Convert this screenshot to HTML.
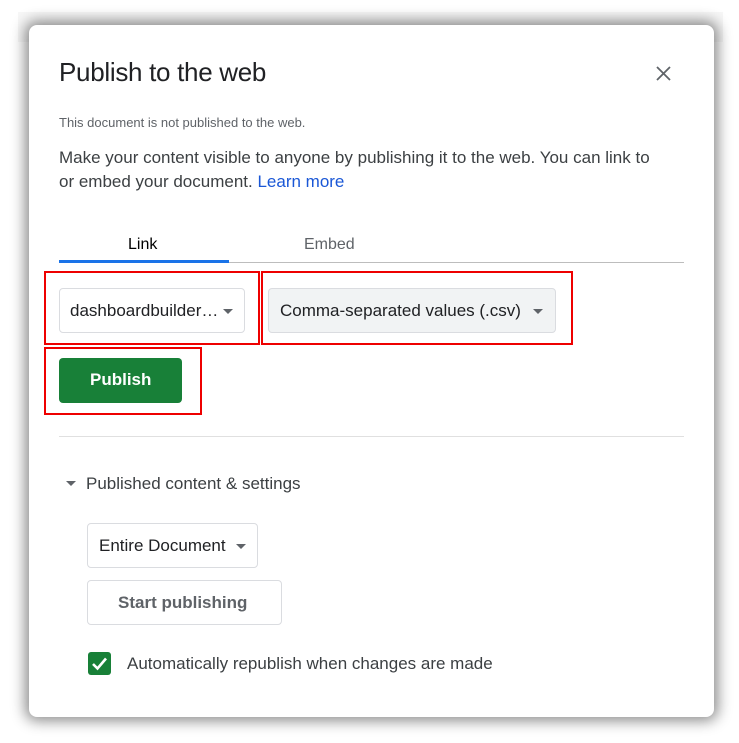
<!DOCTYPE html>
<html><head><meta charset="utf-8"><style>
*{margin:0;padding:0;box-sizing:border-box}
body{width:739px;height:743px;background:#fff;position:relative;overflow:hidden;font-family:"Liberation Sans",Arial,sans-serif;color:#202124}
.bgbar{position:absolute;left:18px;top:12px;width:705px;height:30px;background:#f7f7f7}
.dlg{position:absolute;left:29px;top:25px;width:685px;height:692px;background:#fff;border-radius:8px;box-shadow:0 0 14px 4px rgba(0,0,0,.45)}
.a{position:absolute;white-space:nowrap}
.box{position:absolute;border:1px solid #dadce0;border-radius:4px;background:#fff}
.red{position:absolute;border:2px solid #e00}
.caret{position:absolute;width:0;height:0;border-left:5px solid transparent;border-right:5px solid transparent;border-top:5px solid #5f6368}
</style></head><body>
<div class="bgbar"></div>
<div class="dlg"></div>
<div class="a" style="left:59px;top:57px;font-size:26px;letter-spacing:-0.3px">Publish to the web</div>
<svg class="a" style="left:656px;top:66px" width="15" height="15"><path d="M1 1L14 14M14 1L1 14" stroke="#5f6368" stroke-width="1.8"/></svg>
<div class="a" style="left:59px;top:115px;font-size:13px;color:#5f6368">This document is not published to the web.</div>
<div class="a" style="left:59px;top:146px;font-size:17px;line-height:24px;color:#3c4043">Make your content visible to anyone by publishing it to the web. You can link to<br>or embed your document. <span style="color:#1a57d6">Learn more</span></div>
<div class="a" style="left:128px;top:236px;font-size:16px;color:#000">Link</div>
<div class="a" style="left:304px;top:236px;font-size:16px;color:#5f6368">Embed</div>
<div class="a" style="left:59px;top:262px;width:625px;height:1px;background:#bdbdbd"></div>
<div class="a" style="left:59px;top:260px;width:170px;height:3px;background:#1a73e8"></div>
<div class="box" style="left:59px;top:288px;width:186px;height:45px"></div>
<div class="a" style="left:70px;top:301px;font-size:17px">dashboardbuilder…</div>
<div class="caret" style="left:223px;top:309px"></div>
<div class="red" style="left:44px;top:271px;width:216px;height:74px"></div>
<div class="box" style="left:268px;top:288px;width:288px;height:45px;background:#f1f3f4"></div>
<div class="a" style="left:280px;top:301px;font-size:17px">Comma-separated values (.csv)</div>
<div class="caret" style="left:533px;top:309px"></div>
<div class="red" style="left:261px;top:271px;width:312px;height:74px"></div>
<div class="a" style="left:59px;top:358px;width:123px;height:45px;background:#188038;border-radius:4px"></div>
<div class="a" style="left:90px;top:370px;font-size:17px;font-weight:bold;color:#fff">Publish</div>
<div class="red" style="left:44px;top:347px;width:158px;height:68px"></div>
<div class="a" style="left:59px;top:436px;width:625px;height:1px;background:#e0e0e0"></div>
<div class="caret" style="left:66px;top:481px"></div>
<div class="a" style="left:86px;top:474px;font-size:17px;color:#3c4043">Published content &amp; settings</div>
<div class="box" style="left:87px;top:523px;width:171px;height:45px"></div>
<div class="a" style="left:99px;top:536px;font-size:17px">Entire Document</div>
<div class="caret" style="left:236px;top:544px"></div>
<div class="box" style="left:87px;top:580px;width:195px;height:45px"></div>
<div class="a" style="left:118px;top:593px;font-size:17px;font-weight:bold;color:#5f6368">Start publishing</div>
<div class="a" style="left:88px;top:652px;width:23px;height:23px;background:#188038;border-radius:3px"></div>
<svg class="a" style="left:88px;top:652px" width="23" height="23"><path d="M5 12L9.5 16.5L18 6.5" stroke="#fff" stroke-width="2.6" fill="none"/></svg>
<div class="a" style="left:127px;top:654px;font-size:17px;color:#3c4043">Automatically republish when changes are made</div>
</body></html>
